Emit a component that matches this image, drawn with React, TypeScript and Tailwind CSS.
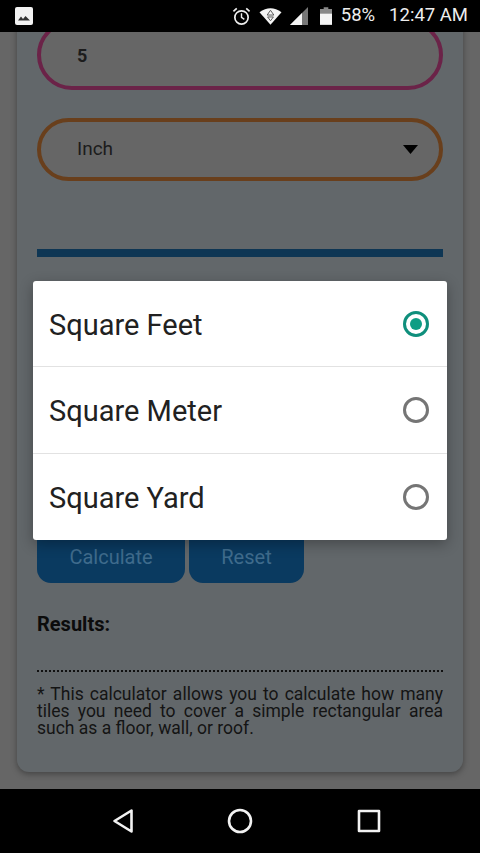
const roboto = "font-['Roboto',sans-serif]";

function ImageIcon() {
  return (
    <svg width="18" height="18" viewBox="0 0 18 18">
      <rect width="18" height="18" rx="2" fill="#f2f2f2" />
      <path d="M3 13.5 L6 9.5 L8 12 L10.5 9 L15 13.5 Z" fill="#333" />
    </svg>
  );
}

function AlarmIcon() {
  return (
    <svg width="19" height="19" viewBox="0 0 20 20" fill="none" stroke="#eee">
      <circle cx="10" cy="11" r="7" strokeWidth="1.8" />
      <path d="M10 6.5 V11 L13 13" strokeWidth="1.5" />
      <path d="M1.5 4.5 L5 1.5 M18.5 4.5 L15 1.5" strokeWidth="1.8" />
    </svg>
  );
}

function WifiIcon() {
  return (
    <svg width="23" height="18" viewBox="0 0 24 18">
      <path d="M0.5 5 Q12 -3 23.5 5 L12 18 Z" fill="#f4f4f4" />
      <path d="M12 3 L15.5 8 H8.5 Z M9 10 H15 L12 14 Z" fill="none" stroke="#555" strokeWidth="1" />
    </svg>
  );
}

function SignalIcon() {
  return (
    <svg width="18" height="18" viewBox="0 0 18 18">
      <path d="M0 18 L18 0 V18 Z" fill="#777" />
      <path d="M0 18 L12 6 V18 Z" fill="#f4f4f4" />
    </svg>
  );
}

function BatteryIcon() {
  return (
    <svg width="12" height="18" viewBox="0 0 13 19">
      <path d="M4 0 H9 V2 H13 V19 H0 V2 H4 Z" fill="#888" />
      <path d="M0 7 H13 V19 H0 Z" fill="#f4f4f4" />
    </svg>
  );
}

function StatusBar() {
  return (
    <div className="relative z-10 flex h-8 shrink-0 items-center bg-black pl-[15px] pr-[12px] text-[18.5px] text-[#eeeeee]">
      <ImageIcon />
      <div className="ml-auto flex items-center">
        <AlarmIcon />
        <div className="ml-[8px]"><WifiIcon /></div>
        <div className="ml-[8px]"><SignalIcon /></div>
        <div className="ml-[12px]"><BatteryIcon /></div>
        <span className="ml-[9px]">58%</span>
        <span className="ml-[14px]">12:47 AM</span>
      </div>
    </div>
  );
}

function NavBar() {
  return (
    <div className="flex h-16 shrink-0 items-center justify-center bg-black pb-[1px] pl-[12px]">
      <svg width="24" height="26" viewBox="0 0 24 26" fill="none" stroke="#f2f2f2" strokeWidth="2.6" strokeLinejoin="round">
        <path d="M20.5 2.5 V23.5 L3.5 13 Z" />
      </svg>
      <svg className="ml-[92px]" width="26" height="26" viewBox="0 0 26 26" fill="none" stroke="#f2f2f2" strokeWidth="2.6">
        <circle cx="13" cy="13" r="11" />
      </svg>
      <svg className="ml-[104px]" width="24" height="24" viewBox="0 0 24 24" fill="none" stroke="#f2f2f2" strokeWidth="2.6" strokeLinejoin="round">
        <rect x="2" y="2" width="20" height="20" />
      </svg>
    </div>
  );
}

function Calculator() {
  return (
    <div className="min-h-0 flex-1 overflow-hidden bg-[#666666] px-[17px]">
      <div className="-mt-[12px] flex h-[752px] flex-col rounded-b-[12px] bg-[#62676a] px-[20px] shadow-[0_2px_6px_rgba(0,0,0,0.35)]">
        <div className="flex h-[70px] items-center rounded-full border-[4px] border-[#6b2348] bg-[#666666] pl-[36px] text-[18px] font-bold text-[#1c1c1c]">
          5
        </div>
        <div className="mt-[28px] flex h-[63px] items-center justify-between rounded-full border-[4px] border-[#693f1c] bg-[#666666] pl-[36px] pr-[21px] text-[19px] text-[#1c1c1c]">
          Inch
          <svg width="15" height="9" viewBox="0 0 15 9"><path d="M0 0 H15 L7.5 9 Z" fill="#000" /></svg>
        </div>
        <div className="mt-[68px] h-2 bg-[#0e3654]" />
        <div className="mt-[273px] flex gap-[4px]">
          <div className="flex h-[53px] w-[148px] items-center justify-center rounded-b-[14px] bg-[#0a3a60] text-[20px] text-[#3f6b8c]">
            Calculate
          </div>
          <div className="flex h-[53px] w-[115px] items-center justify-center rounded-b-[14px] bg-[#0a3a60] text-[20px] text-[#3f6b8c]">
            Reset
          </div>
        </div>
        <p className="mt-[29px] text-[20px] leading-[24px] font-bold text-[#0c0c0c]">Results:</p>
        <div className="mt-[34px] border-t-2 border-dotted border-[#111111]" />
        <p className="mt-[14px] text-justify text-[17.5px] leading-[17.2px] text-[#141414]">
          * This calculator allows you to calculate how many tiles you need to cover a simple rectangular area such as a floor, wall, or roof.
        </p>
      </div>
    </div>
  );
}

function UnitOption({ label, selected, last }: { label: string; selected?: boolean; last?: boolean }) {
  return (
    <div className={`flex h-[86.4px] items-center justify-between pl-[16px] pr-[18px] ${last ? "" : "border-b border-[#e2e2e2]"}`}>
      <span className="pt-[4px] text-[29px] text-[#212121]">{label}</span>
      {selected ? (
        <span className="flex h-[26px] w-[26px] items-center justify-center rounded-full border-[3px] border-[#0f8f7c]">
          <span className="h-3 w-3 rounded-full bg-[#0f9d84]" />
        </span>
      ) : (
        <span className="h-[26px] w-[26px] rounded-full border-[3px] border-[#757575]" />
      )}
    </div>
  );
}

export default function App() {
  return (
    <div className={`relative flex h-[853px] w-[480px] flex-col overflow-hidden ${roboto}`}>
      <StatusBar />
      <Calculator />
      <NavBar />
      {/* unit picker dialog */}
      <div className="absolute left-[33px] top-[281px] z-20 w-[414px] rounded-[3px] bg-white shadow-[0_4px_14px_rgba(0,0,0,0.3)]">
        <UnitOption label="Square Feet" selected />
        <UnitOption label="Square Meter" />
        <UnitOption label="Square Yard" last />
      </div>
    </div>
  );
}
